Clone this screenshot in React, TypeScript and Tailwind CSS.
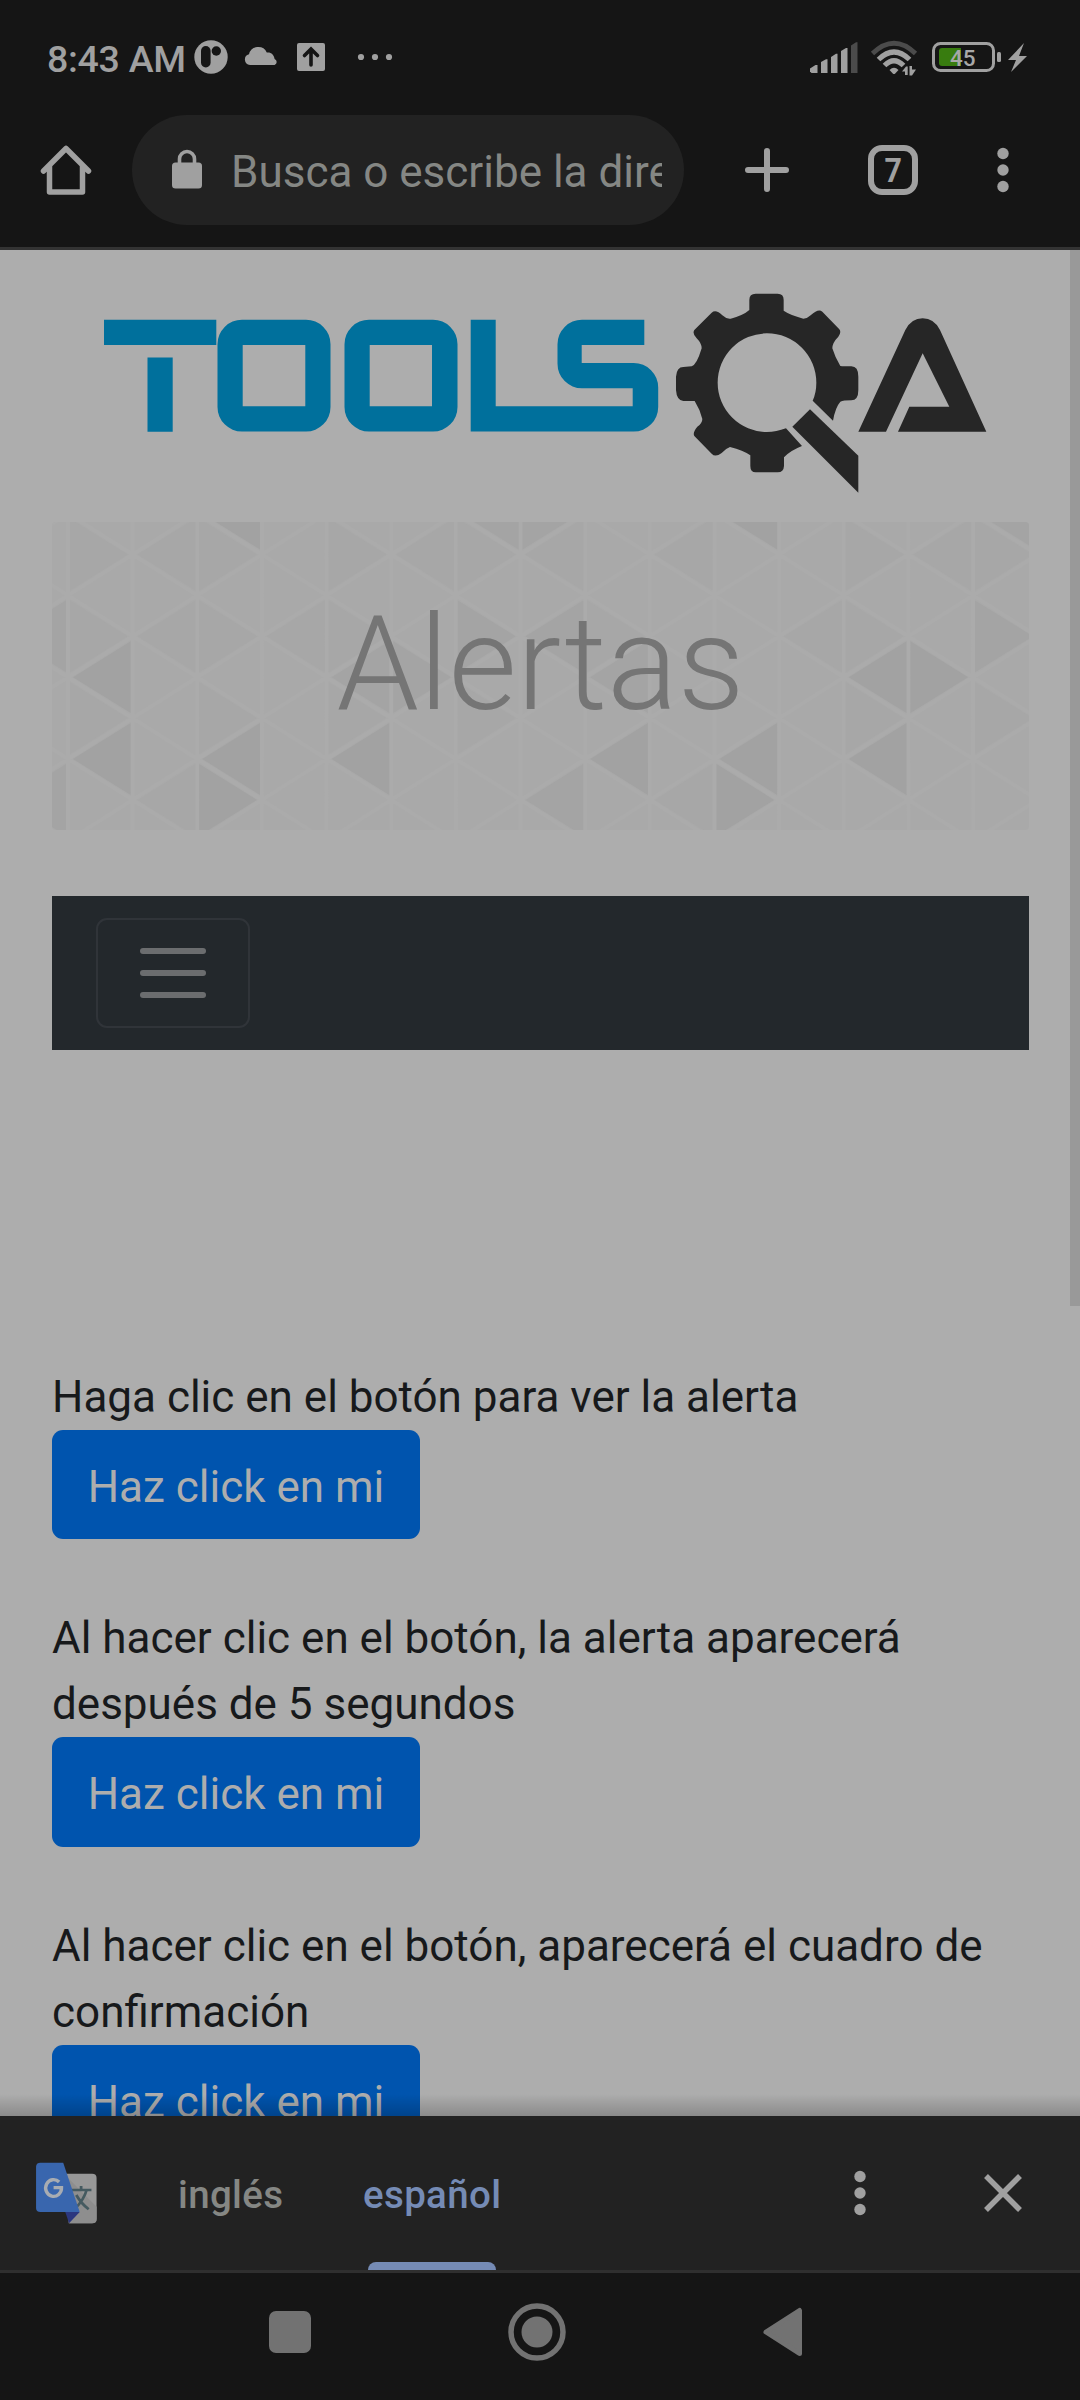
import React from "react";

// Lattice geometry of the header pattern: column n, half-row k.
const nx = (n: number) => 16 + 64.65 * n;
const ny = (k: number) => 32.5 + 40.9 * k;

function tri(dir: number, n: number, k: number) {
  const e = nx(n + dir) - dir * 2;
  const cx = nx(n) + dir * 5;
  return `M${cx} ${ny(k)}L${e} ${ny(k - 1) + 5}L${e} ${ny(k + 1) - 5}Z`;
}

const strong: [number, number, number][] = [
  [1, 0, 3], [1, 0, 5], [1, 2, 5], [-1, 3, 6], [1, 4, 5], [1, 2, -1],
  [1, 8, 5], [1, 10, 5], [-1, 11, 6], [1, 10, -1], [1, 12, 3], [-1, 14, 3], [1, 12, 5],
];
const medium: [number, number, number][] = [
  [1, 4, 3], [-1, 6, 3], [-1, 7, 2], [1, 7, 2], [1, 8, 3], [-1, 15, 2], [1, 7, 6],
  [1, -1, 2], [1, -1, 6], [1, 6, -1], [-1, 8, -1], [1, 14, -1],
];
const faint: [number, number, number][] = [
  [1, 1, 0], [-1, 3, 0], [-1, 1, 2], [1, 3, 2], [-1, 5, 2], [1, 1, 2], [-1, 1, 0], [-1, 5, 0],
  [-1, 3, 2], [-1, 5, 4], [1, 5, 0], [-1, 7, 0], [1, 7, 0], [-1, 9, 2], [1, 9, 0], [-1, 13, 0],
  [-1, 13, 2], [1, 11, 2], [-1, 13, 4], [1, 13, 0], [-1, 15, 0], [1, 1, 6], [-1, 7, 4], [-1, 15, 4],
  [-1, 1, 4], [-1, 3, 4], [1, 9, 6],
];

function Pattern() {
  const lines: string[] = [];
  for (let n = -1; n <= 15; n++) {
    lines.push(`M${nx(n)} 0V308`);
    const odd = Math.abs(n) % 2 === 1;
    for (let k = odd ? -2 : -1; k <= 8; k += 2) {
      lines.push(`M${nx(n)} ${ny(k)}L${nx(n + 1)} ${ny(k + 1)}M${nx(n)} ${ny(k)}L${nx(n + 1)} ${ny(k - 1)}`);
    }
  }
  return (
    <svg className="absolute inset-0 h-full w-full" viewBox="0 0 977 308" preserveAspectRatio="none">
      <path d={lines.join("")} stroke="#ababab" strokeWidth="4" fill="none" />
      <path d={faint.map((t) => tri(...t)).join("")} fill="#a7a7a7" />
      <path d={medium.map((t) => tri(...t)).join("")} fill="#a4a4a4" />
      <path d={strong.map((t) => tri(...t)).join("")} fill="#a2a2a2" />
    </svg>
  );
}

function StatusBar() {
  return (
    <div className="flex h-[115px] w-full shrink-0">
      <div className="w-[186px] pt-[36px] pl-[47px] text-[37.5px] leading-[46px] font-medium tracking-[-0.3px] whitespace-nowrap text-[#a0a0a0]">
        8:43 AM
      </div>
      <svg className="h-[115px] w-[224px]" viewBox="186 0 224 115" fill="#a0a0a0">
        <circle cx="211" cy="57" r="16.7" />
        <rect x="201" y="46" width="9.6" height="21.5" rx="4.8" fill="#151515" />
        <circle cx="216.3" cy="51" r="4.7" fill="#151515" />
        <path d="M250 65a5.5 5.5 0 0 1-1-10.800a9.500 9.500 0 0 1 17.800-1.700c4.500-.5 7 2 7.800 6.500a3.200 3.200 0 0 1 0 6Z" />
        <rect x="297" y="43" width="28" height="28" rx="2" />
        <path d="M311 65V50M304.500 55.500L311 49l6.500 6.500" stroke="#151515" strokeWidth="3.600" fill="none" strokeLinecap="round" />
        <circle cx="361" cy="57" r="3.100" />
        <circle cx="375" cy="57" r="3.100" />
        <circle cx="389" cy="57" r="3.100" />
      </svg>
      <svg className="ml-auto h-[115px] w-[280px]" viewBox="800 0 280 115" fill="#a0a0a0">
        <path d="M810 71.500V68.500L815.500 65H817.500V73H811.500Z" />
        <path d="M821 73V62L826 59.300H827.500V73Z" />
        <path d="M831 73V57L836 53.700H837.500V73Z" />
        <path d="M841 73V51L846 48H847.500V73Z" />
        <path d="M851 73V45.500L856 42.300H857.500V73Z" fill="#4b4b4b" />
        <g fill="none" strokeWidth="4.800">
          <path d="M872.500 53.500Q894 33 915.500 53.500" stroke="#4b4b4b" />
          <path d="M878.500 59.500Q894 44.500 909.500 59.500" stroke="#a0a0a0" strokeWidth="5.200" />
          <path d="M884.500 65.500Q894 56 903.500 65.500" stroke="#a0a0a0" strokeWidth="5.200" />
        </g>
        <path d="M889.500 70Q894 65.500 898.500 70L895 73.700Q894 74.500 893 73.700Z" />
        <path d="M902 71.500L906 66.500H907.700V75H905V71.500ZM909.500 75.500V66H912V69.500H916L912 75.500Z" />
        <rect x="933.500" y="43.500" width="60" height="27" rx="7" fill="none" stroke="#a0a0a0" strokeWidth="3" />
        <rect x="997" y="52" width="4" height="10" rx="1.500" />
        <path d="M942 48H961V66H942A3 3 0 0 1 939 63V51A3 3 0 0 1 942 48Z" fill="#387c0f" />
        <text x="950" y="66" fontSize="22.500" fontWeight="500" fill="#a8a8a8">45</text>
        <path d="M1024 43L1008 60H1016L1011 72L1027 56H1019Z" />
      </svg>
    </div>
  );
}

function Toolbar() {
  return (
    <div className="flex h-[132px] shrink-0 items-start">
      <svg className="h-[110px] w-[132px]" viewBox="0 115 132 110" fill="none" stroke="#a0a0a0">
        <path d="M49.500 166V192H82.500V166M43.500 171L66 148.500L88.500 171" strokeWidth="5.500" strokeLinejoin="round" strokeLinecap="round" />
      </svg>
      <div className="flex h-[110px] w-[552px] items-center rounded-full bg-[#222222] pr-[22px] pl-[39px]">
        <svg className="h-[42px] w-[32px] shrink-0" viewBox="171 149 32 42">
          <rect x="172" y="162.500" width="30" height="26" rx="3.500" fill="#a0a0a0" />
          <path d="M179.500 164V159a7.500 7.500 0 0 1 15 0V164" fill="none" stroke="#a0a0a0" strokeWidth="3.600" />
        </svg>
        <div className="ml-[28px] flex-1 overflow-hidden pt-[3px] text-[44px] leading-[60px] whitespace-nowrap text-[#858784]">
          Busca o escribe la dire
        </div>
      </div>
      <svg className="h-[110px] w-[396px]" viewBox="684 115 396 110" fill="none" stroke="#a0a0a0">
        <path d="M748 170H786M767 151V189" strokeWidth="6" strokeLinecap="round" />
        <rect x="871" y="148" width="44" height="44" rx="11" strokeWidth="6" />
        <text x="893.300" y="182" fontSize="33" fontWeight="700" textAnchor="middle" fill="#a0a0a0" stroke="none" transform="translate(893.300 0) scale(.92 1) translate(-893.300 0)">7</text>
        <g fill="#a0a0a0" stroke="none">
          <circle cx="1003" cy="153.500" r="5.700" />
          <circle cx="1003" cy="170" r="5.700" />
          <circle cx="1003" cy="186.500" r="5.700" />
        </g>
      </svg>
    </div>
  );
}

function Logo() {
  return (
    <svg className="h-[272px] w-[1029px] shrink-0" viewBox="0 250 1029 272">
      <g fill="#00709c">
        <path d="M104 319.700H216.300V345H104ZM147.500 357.500H172.700V431.700H147.500Z" />
        <path fillRule="evenodd" d="M242 319.700H306a24.500 24.500 0 0 1 24.500 24.500V407a24.500 24.500 0 0 1-24.500 24.500H242a24.500 24.500 0 0 1-24.500-24.500V344.200a24.500 24.500 0 0 1 24.500-24.500ZM242.700 345V406.300H305.300V345Z" />
        <path fillRule="evenodd" d="M369 319.700H433a24.500 24.500 0 0 1 24.500 24.500V407a24.500 24.500 0 0 1-24.500 24.500H369a24.500 24.500 0 0 1-24.500-24.500V344.200a24.500 24.500 0 0 1 24.500-24.500ZM369.700 345V406.300H432V345Z" />
        <path d="M470.700 319.700H495.700V406.300H632.700V388.300H582a24.500 24.500 0 0 1-24.500-24.500V344.200a24.500 24.500 0 0 1 24.500-24.500H644.300V345H581.700V363H633.700a24.500 24.500 0 0 1 24.500 24.500V407a24.500 24.500 0 0 1-24.500 24.500H470.700Z" />
      </g>
      <g transform="translate(560 270) scale(.33333)" fill="#262626">
        <path d="M568 120V90Q568 71 587 71H653Q671 71 671 90V122Q690 135 730 146Q742 146 752 136Q775 115 787 125L838 178Q845 187 835 200Q817 218 817 235Q825 262 841 288Q850 289 874 289Q895 289 895 320V360Q895 391 874 391Q850 391 841 395Q826 412 819 452L758 392Q769 368 769 338A148 148 0 1 0 621 486Q649 486 678 475L726 528Q690 542 672 562V588Q671 607 653 607H587Q571 607 571 588V556Q550 541 510 531Q498 535 485 549Q466 563 455 551L403 498Q397 488 412 470Q427 460 427 447Q421 420 404 393H370Q350 391 348 360V320Q350 291 370 291L395 289Q410 285 425 235Q425 220 410 205Q396 190 403 180L455 128Q468 117 487 136Q500 148 512 146Q550 136 568 120Z" />
        <path d="M750 418L895 557V668L697 470Z" />
        <path d="M895 485L1036 180Q1054 145 1088 145Q1122 145 1140 180L1279 485H1014L1048 410H1168L1088 250L978 485Z" />
      </g>
    </svg>
  );
}

function AlertItem({ lines }: { lines: string[] }) {
  return (
    <section className="mb-[66px] shrink-0">
      {lines.map((l) => (
        <p key={l} className="h-[66px] text-[44px] leading-[66px] whitespace-nowrap text-[#17191b]">{l}</p>
      ))}
      <button className="block h-[109.5px] w-[368px] rounded-[11px] bg-[#0054ae] pt-[4.8px] text-[44px] leading-[66px] whitespace-nowrap text-[#adadad]">
        Haz click en mi
      </button>
    </section>
  );
}

function TranslateIcon() {
  return (
    <svg className="h-[64px] w-[64px]" viewBox="102 216 186 192" preserveAspectRatio="none">
      <path d="M190 251H268Q281 251 281 264V387Q281 400 268 400H200Z" fill="#989898" />
      <path d="M196 262L281 350V387Q281 400 268 400H201L232 366Z" fill="#8e8e8e" />
      <path d="M205 300H266M236 288V300M252 300Q244 330 218 356M222 315Q236 340 258 358" stroke="#455a60" strokeWidth="8" fill="none" />
      <path d="M190 366H232L201 400Z" fill="#2b377f" />
      <path d="M118 218H184L232 366H118Q105 366 105 353V231Q105 218 118 218Z" fill="#3966ae" />
      <path d="M172 276A23 25 0 1 0 179 293H156" stroke="#a8acb2" strokeWidth="10" fill="none" />
    </svg>
  );
}

function TranslateBar() {
  return (
    <div className="flex h-[154px] shrink-0 bg-[#222222] text-[38.5px] leading-[46px] font-medium">
      <div className="w-[178px] pt-[46px] pl-[34.5px]"><TranslateIcon /></div>
      <div className="w-[185px] pt-[56px] tracking-[0.35px] text-[#858784]">inglés</div>
      <div className="flex w-[140px] flex-col justify-between pt-[56px] tracking-[0.35px] text-[#758bb5]">
        <span>español</span>
        <div className="ml-[5px] h-[8px] w-[128px] rounded-t-[8px] bg-[#758bb5]" />
      </div>
      <svg className="ml-auto h-[154px] w-[280px]" viewBox="800 2116 280 154" fill="#a0a0a0">
        <circle cx="860" cy="2176.500" r="5.700" />
        <circle cx="860" cy="2193" r="5.700" />
        <circle cx="860" cy="2209.500" r="5.700" />
        <path d="M986 2176L1020 2210M1020 2176L986 2210" stroke="#a0a0a0" strokeWidth="5.500" />
      </svg>
    </div>
  );
}

export default function App() {
  return (
    <div className="flex h-[2400px] w-[1080px] flex-col overflow-hidden bg-[#151515] font-['Roboto',sans-serif]">
      <StatusBar />
      <Toolbar />
      <div className="h-[3px] shrink-0 bg-[#333333]" />
      <main className="relative flex h-[1866px] shrink-0 flex-col overflow-hidden bg-[#adadad]">
        <Logo />
        <div className="relative ml-[52px] flex h-[308px] w-[977px] shrink-0 justify-center overflow-hidden rounded-[4px] bg-[#a9a9a9]">
          <Pattern />
          <h1 className="relative pt-[63px] text-[132px] leading-[158px] font-light text-[#757575]">Alertas</h1>
        </div>
        <nav className="mt-[66px] ml-[52px] flex h-[154px] w-[977px] shrink-0 items-center bg-[#23282c] pl-[44px]">
          <button className="flex h-[110px] w-[154px] flex-col items-center justify-center gap-[16.5px] rounded-[11px] border-2 border-[#303439]">
            <span className="h-[5.5px] w-[66px] rounded-full bg-[#6b6d6f]" />
            <span className="h-[5.5px] w-[66px] rounded-full bg-[#6b6d6f]" />
            <span className="h-[5.5px] w-[66px] rounded-full bg-[#6b6d6f]" />
          </button>
        </nav>
        <div className="mt-[313.6px] flex flex-col pl-[52px]">
          <AlertItem lines={["Haga clic en el botón para ver la alerta"]} />
          <AlertItem lines={["Al hacer clic en el botón, la alerta aparecerá", "después de 5 segundos"]} />
          <AlertItem lines={["Al hacer clic en el botón, aparecerá el cuadro de", "confirmación"]} />
        </div>
        <div className="absolute top-0 right-0 h-[1056px] w-[10px] bg-[#999999]" />
        <div className="absolute inset-x-0 bottom-0 h-[22px] bg-linear-to-b from-black/0 to-black/20" />
      </main>
      <TranslateBar />
      <div className="h-[3px] shrink-0 bg-[#2f2f2f]" />
      <svg className="h-[127px] w-full shrink-0" viewBox="0 2273 1080 127" fill="#727272">
        <rect x="269" y="2311" width="42" height="42" rx="7" />
        <circle cx="537" cy="2332" r="26" fill="none" stroke="#727272" strokeWidth="5.500" />
        <circle cx="537" cy="2332" r="15.500" />
        <path d="M766 2332L799.500 2310.500V2353.500Z" stroke="#727272" strokeWidth="5" strokeLinejoin="round" />
      </svg>
    </div>
  );
}
